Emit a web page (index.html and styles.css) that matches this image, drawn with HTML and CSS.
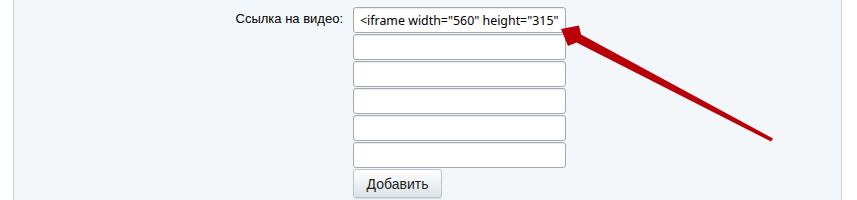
FILE: index.html
```html
<!DOCTYPE html>
<html lang="ru">
<head>
    <meta charset="UTF-8">
    <title>Ссылка на видео</title>
    <link rel="stylesheet" href="styles.css">
</head>
<body>
    <div class="panel">
        <div class="form-row">
            <label class="form-label" for="video1">Ссылка на видео:</label>
            <div class="form-fields">
                <input type="text" id="video1" class="field" value="&lt;iframe width=&quot;560&quot; height=&quot;315&quot; src=&quot;//www.youtube.com/embed/">
                <input type="text" class="field">
                <input type="text" class="field">
                <input type="text" class="field">
                <input type="text" class="field">
                <input type="text" class="field">
                <button class="add-button">Добавить</button>
            </div>
        </div>
    </div>
    <svg class="arrow" width="857" height="200" viewBox="0 0 857 200">
        <polygon points="561,29 579,25.5 581,34.5 773,138.5 771,141.5 576.5,42.5 568,46" fill="#b8000a"/>
    </svg>
</body>
</html>
```

FILE: styles.css
```css
body {
    margin: 0;
    background-color: #fff;
    font-family: Arial, "Liberation Sans", sans-serif;
    font-size: 13px;
    color: #000;
}
.panel {
    margin-left: 13px;
    width: 827px;
    height: 200px;
    background-color: #f3f7f9;
    border-left: 1px solid #c7d3dc;
    border-right: 1px solid #c7d3dc;
}
.form-row {
    display: grid;
    grid-template-columns: 329px 213px;
    column-gap: 10px;
    padding-top: 7px;
}
.form-label {
    text-align: right;
    padding-top: 4px;
}
.form-fields {
    display: flex;
    flex-direction: column;
    align-items: flex-start;
}
.field {
    width: 213px;
    height: 26px;
    margin: 0 0 1px 0;
    padding: 0 6px;
    box-sizing: border-box;
    border: 1px solid #a4a9ae;
    border-radius: 3px;
    background-color: #fff;
    font-family: "Noto Sans", "DejaVu Sans", sans-serif;
    font-size: 12.4px;
    color: #000;
    box-shadow: inset 0 1px 1px rgba(0,0,0,0.08);
}
.add-button {
    width: 89px;
    height: 29px;
    margin-top: 0;
    border: 1px solid #bcc5cc;
    border-radius: 3px;
    background: linear-gradient(#ffffff, #dde3e8);
    font-family: Arial, "Liberation Sans", sans-serif;
    font-size: 14px;
    color: #222;
    box-shadow: 0 1px 1px rgba(0,0,0,0.12);
}
.arrow {
    position: absolute;
    top: 0;
    left: 0;
}
```
